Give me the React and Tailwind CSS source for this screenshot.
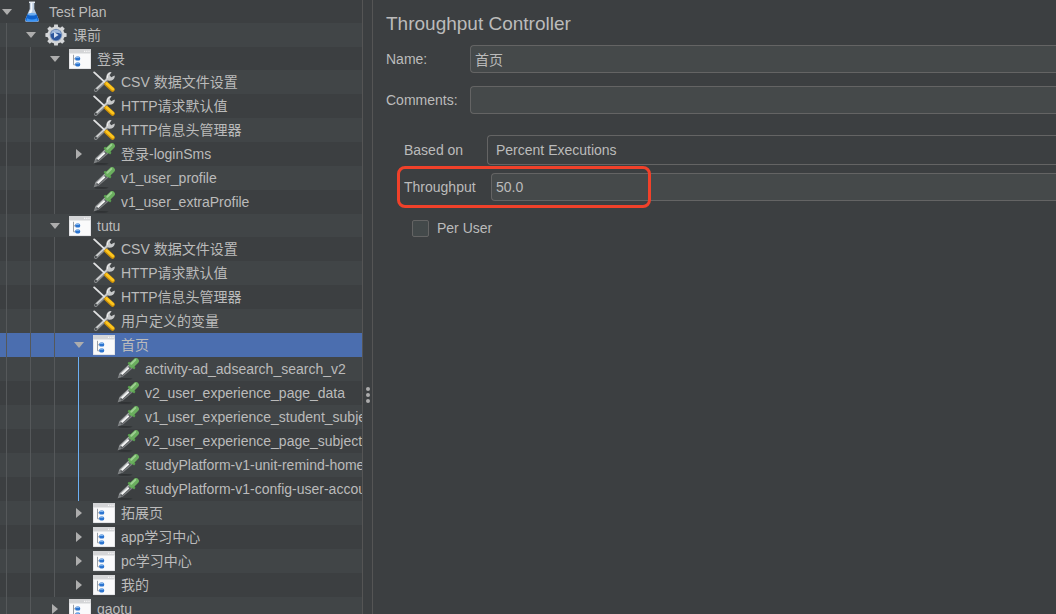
import React from "react";

const tree = [
  { depth: 0, icon: "flask", label: "Test Plan", state: "open" },
  { depth: 1, icon: "gear", label: "课前", state: "open" },
  { depth: 2, icon: "controller", label: "登录", state: "open" },
  { depth: 3, icon: "tools", label: "CSV 数据文件设置" },
  { depth: 3, icon: "tools", label: "HTTP请求默认值" },
  { depth: 3, icon: "tools", label: "HTTP信息头管理器" },
  { depth: 3, icon: "dropper", label: "登录-loginSms", state: "closed" },
  { depth: 3, icon: "dropper", label: "v1_user_profile" },
  { depth: 3, icon: "dropper", label: "v1_user_extraProfile" },
  { depth: 2, icon: "controller", label: "tutu", state: "open" },
  { depth: 3, icon: "tools", label: "CSV 数据文件设置" },
  { depth: 3, icon: "tools", label: "HTTP请求默认值" },
  { depth: 3, icon: "tools", label: "HTTP信息头管理器" },
  { depth: 3, icon: "tools", label: "用户定义的变量" },
  { depth: 3, icon: "controller", label: "首页", state: "open", selected: true },
  { depth: 4, icon: "dropper", label: "activity-ad_adsearch_search_v2" },
  { depth: 4, icon: "dropper", label: "v2_user_experience_page_data" },
  { depth: 4, icon: "dropper", label: "v1_user_experience_student_subject" },
  { depth: 4, icon: "dropper", label: "v2_user_experience_page_subject" },
  { depth: 4, icon: "dropper", label: "studyPlatform-v1-unit-remind-home" },
  { depth: 4, icon: "dropper", label: "studyPlatform-v1-config-user-account" },
  { depth: 3, icon: "controller", label: "拓展页", state: "closed" },
  { depth: 3, icon: "controller", label: "app学习中心", state: "closed" },
  { depth: 3, icon: "controller", label: "pc学习中心", state: "closed" },
  { depth: 3, icon: "controller", label: "我的", state: "closed" },
  { depth: 2, icon: "controller", label: "gaotu", state: "closed" },
];

function Flask() {
  return (
    <svg viewBox="0 0 22 22" className="size-[22px]" aria-hidden="true">
      <path d="M8.700 1.500h4.600v6.500l4.500 10.500q.6 2.500-2 2.500H6.200q-2.600 0-2-2.500L8.700 8z" fill="#b9cbe0" />
      <path d="M9.700 2h1.600v8l-3 5H6.500l3.200-7z" fill="#f3f7fb" />
      <path d="M6.500 13h9l2.100 5.600q.4 2-1.900 2H6.300q-2.300 0-1.900-2z" fill="#0f62cc" />
      <ellipse cx="11" cy="13.200" rx="4.300" ry="1.300" fill="#6aabee" />
      <path d="M6 17.300q5 2.500 10 0l.8 2.400q-5.800 1.500-11.600 0z" fill="#3b95f5" />
      <path d="M8 1.300h6" stroke="#e4ebf1" strokeWidth="1.500" />
    </svg>
  );
}

function Gear() {
  return (
    <svg viewBox="0 0 22 22" className="size-[22px]" aria-hidden="true">
      <g fill="#d4d6d8">
        {[0, 45, 90, 135, 180, 225, 270, 315].map((a) => (
          <path key={a} d="M8.600 4.500 9.200.4h3.600l.6 4.100z" transform={`rotate(${a} 11 11)`} />
        ))}
        <circle cx="11" cy="11" r="8.600" />
      </g>
      <circle cx="11" cy="11" r="6.300" fill="#8b9fbd" />
      <circle cx="11" cy="11" r="5.400" fill="#2b559c" />
      <path d="M5.900 10a5.200 5.200 0 0 1 10.200 0q-5-2.500-10.200 0z" fill="#9fb8da" />
      <path d="M9 8v6l4.600-3z" fill="#d3dff0" />
    </svg>
  );
}

function Controller() {
  return (
    <svg viewBox="0 0 22 22" className="size-[22px]" aria-hidden="true">
      <rect y="1" width="22" height="20" rx="0.800" fill="#fafafb" />
      <path d="M0 1.800Q0 1 .8 1h20.400q.8 0 .8.800V5.500H0z" fill="#d4d5d7" />
      <path d="M15 3.300h1.200m1 0h1.200m1 0h1.200" stroke="#f6f6f6" strokeWidth="1.200" />
      <path d="M.4 5.500v15.100h21.200V5.500" fill="none" stroke="#d8dadc" strokeWidth="0.700" />
      <path d="M4.500 6.800v10H6.500M4.500 10.800h2" fill="none" stroke="#9a9fa5" strokeWidth="1" />
      <rect x="6.200" y="8.600" width="5" height="4" rx="1.600" fill="#2b74d0" />
      <rect x="6.200" y="14.400" width="5" height="4" rx="1.600" fill="#2b74d0" />
      <path d="M7 9.500h3.400M7 15.300h3.400" stroke="#8dbdf2" strokeWidth="0.900" />
    </svg>
  );
}

function Tools() {
  return (
    <svg viewBox="0 0 22 22" className="size-[22px]" aria-hidden="true">
      <path d="M2.800 19.200 15.500 7.200" stroke="#85888a" strokeWidth="3.600" strokeLinecap="round" />
      <path d="M4 17.400 15.500 6.700" stroke="#cfd1d2" strokeWidth="1.500" strokeLinecap="round" />
      <path d="M13.300 8Q12.600 2.700 16.800.9l1.800.2-1.900 3.200 1.500 1.900 3.300-1.700.3 1.200q-1 4.300-5.600 4.100z" fill="#c6c8c9" />
      <path d="M14.300 7.300q-.4-3.600 2.400-5.300" stroke="#f0f0f0" strokeWidth="1" fill="none" />
      <circle cx="2.900" cy="19" r="1" fill="#424648" />
      <path d="M1.200 1.400 12 11.400" stroke="#e0e1e2" strokeWidth="1.900" strokeLinecap="round" />
      <path d="m13.400 12.900 6.200 5.700" stroke="#cf9208" strokeWidth="4.400" strokeLinecap="round" />
      <path d="m13.700 12.500 6.100 5.500" stroke="#fdc61f" strokeWidth="2.700" strokeLinecap="round" />
    </svg>
  );
}

function Dropper() {
  return (
    <svg viewBox="0 0 22 22" className="size-[22px]" aria-hidden="true">
      <ellipse cx="8" cy="20.800" rx="7.500" ry="0.900" fill="#2f3234" />
      <path d="M.6 20.400 2.400 15 11.500 6.500l4.200 3.800L6 18.600z" fill="#7f8284" />
      <path d="M4 18 13.900 9.200" stroke="#5a5e60" strokeWidth="1.800" />
      <path d="M4.600 16.300 11.600 9.700" stroke="#f4f5f5" strokeWidth="2" />
      <path d="M2.500 16.300 11.800 7.300" stroke="#b4b7b8" strokeWidth="1" />
      <path d="m12.200 5.300 4.700 4.500" stroke="#589c4e" strokeWidth="2.800" strokeLinecap="round" />
      <path d="m14.900 7 4.100-4" stroke="#6aae5e" strokeWidth="5.800" strokeLinecap="round" />
      <path d="m14.300 5.800 4-3.900" stroke="#9ed092" strokeWidth="2" strokeLinecap="round" />
    </svg>
  );
}

const icons = { flask: Flask, gear: Gear, controller: Controller, tools: Tools, dropper: Dropper };

function Arrow({ state }) {
  if (!state) return null;
  return (
    <svg viewBox="0 0 12 12" className="size-3" aria-hidden="true">
      <path d={state === "open" ? "M1 3h10L6 9z" : "M3 1v10l6-5z"} fill="#adadad" />
    </svg>
  );
}

function TreeRow({ node, striped }) {
  const Icon = icons[node.icon];
  const tone = node.selected ? "bg-[#4b6eaf]" : striped ? "bg-[#414547]" : "bg-[#3c3f41]";
  const height = node.state && node.depth % 2 === 0 ? "h-[23px]" : "h-6";
  return (
    <li
      role="treeitem"
      aria-level={node.depth + 1}
      aria-expanded={node.state ? node.state === "open" : undefined}
      aria-selected={!!node.selected}
      className={tone}
    >
      <button type="button" className={`flex w-full items-center whitespace-nowrap text-left ${height}`}>
        {Array.from({ length: node.depth }, (_, i) => (
          <span key={i} className="flex w-6 shrink-0 self-stretch pl-1.5">
            <span className={`w-px ${i === 3 ? "bg-[#6cb0f5]" : "bg-[#55585a]"}`} />
          </span>
        ))}
        <span className="flex w-[14px] shrink-0 justify-center">
          <Arrow state={node.state} />
        </span>
        <span className="ml-[7px] mr-1.5 shrink-0">
          <Icon />
        </span>
        <span>{node.label}</span>
      </button>
    </li>
  );
}

const field = "min-w-0 flex-1 border border-r-0 border-[#646464] text-[#bbbbbb] outline-none rounded-l";

export default function App() {
  return (
    <div className="flex h-screen overflow-hidden bg-[#3c3f41] font-['Liberation_Sans','Noto_Sans_CJK_SC',sans-serif] text-[14px] leading-5 text-[#bbbbbb]">
      <nav aria-label="Test plan tree" className="w-[362px] shrink-0 overflow-hidden">
        <ul role="tree">
          {tree.map((node, i) => (
            <TreeRow key={i} node={node} striped={i % 2 === 1} />
          ))}
        </ul>
      </nav>

      <div
        role="separator"
        aria-orientation="vertical"
        className="flex w-[11px] shrink-0 flex-col items-center justify-center gap-0.5 border-x border-[#555555] pt-44"
      >
        <span className="size-1 rounded-full bg-[#adadad]" />
        <span className="size-1 rounded-full bg-[#adadad]" />
        <span className="size-1 rounded-full bg-[#adadad]" />
      </div>

      <main className="min-w-0 flex-1 pl-[13px] pt-3">
        <h1 className="text-[19px] leading-6">Throughput Controller</h1>
        <form className="mt-[9px]">
          <div className="flex items-center">
            <label htmlFor="name" className="w-[84px] shrink-0">Name:</label>
            <input id="name" type="text" defaultValue="首页" className={`${field} h-7 bg-[#45494a] px-1`} />
          </div>
          <div className="mt-[13px] flex items-center">
            <label htmlFor="comments" className="w-[84px] shrink-0">Comments:</label>
            <input id="comments" type="text" className={`${field} h-7 bg-[#45494a] px-1`} />
          </div>

          <div className="mt-[21px] pl-[18px]">
            <div className="flex items-center">
              <label htmlFor="based-on" className="w-[83px] shrink-0">Based on</label>
              <select id="based-on" className={`${field} h-[30px] appearance-none bg-[#3c3f41] px-2`}>
                <option>Percent Executions</option>
                <option>Total Executions</option>
              </select>
            </div>
            <div className="relative mt-2 flex items-center">
              <label htmlFor="throughput" className="w-[87px] shrink-0">Throughput</label>
              <input id="throughput" type="text" defaultValue="50.0" className={`${field} h-7 bg-[#45494a] px-1`} />
              <span className="pointer-events-none absolute -inset-y-[7px] -left-[7px] w-[254px] rounded-lg border-3 border-[#f0412a]" />
            </div>
            <label className="mt-[17px] flex w-fit items-center gap-2 pl-2">
              <input type="checkbox" className="size-[17px] appearance-none rounded-xs border border-[#646464] bg-[#43494a]" />
              Per User
            </label>
          </div>
        </form>
      </main>
    </div>
  );
}
